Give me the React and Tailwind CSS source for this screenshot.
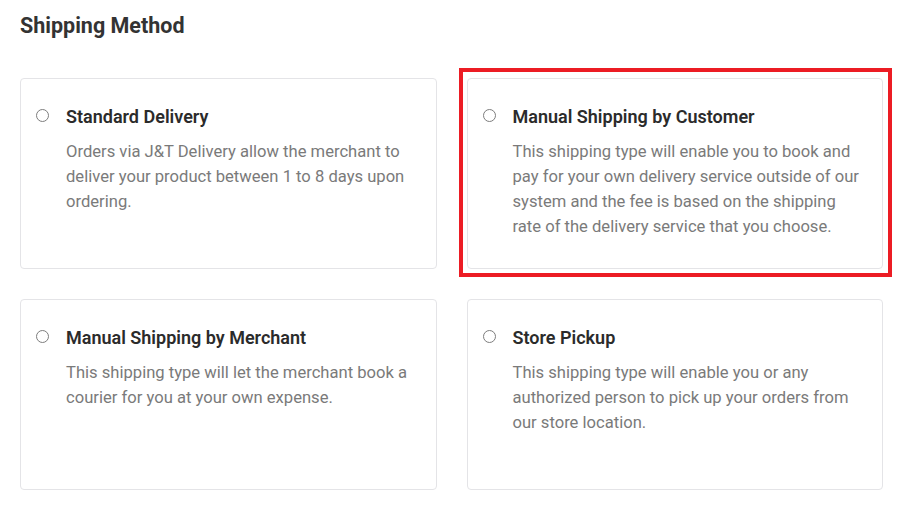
const methods = [
  {
    title: 'Standard Delivery',
    text: 'Orders via J&T Delivery allow the merchant to deliver your product between 1 to 8 days upon ordering.',
  },
  {
    title: 'Manual Shipping by Customer',
    text: 'This shipping type will enable you to book and pay for your own delivery service outside of our system and the fee is based on the shipping rate of the delivery service that you choose.',
    highlight: true,
  },
  {
    title: 'Manual Shipping by Merchant',
    text: 'This shipping type will let the merchant book a courier for you at your own expense.',
  },
  {
    title: 'Store Pickup',
    text: 'This shipping type will enable you or any authorized person to pick up your orders from our store location.',
  },
];

function MethodCard({ title, text, highlight }) {
  return (
    <div className="relative">
      {highlight && (
        <div className="pointer-events-none absolute -left-2 -top-[10px] -right-[9px] -bottom-2 border-4 border-[#ec1c24]" />
      )}
      <label className="flex h-[191px] cursor-pointer items-start rounded border border-[#e4e4e7] bg-white pl-[15px] pr-5 pt-[26px]">
        <span className="mt-[4px] h-[13px] w-[13px] shrink-0 rounded-full border border-[#7d7d7d] bg-white" />
        <div className="ml-[17px]">
          <div className="text-[18px] font-semibold leading-[24px] text-[#2b2b2b]">{title}</div>
          <p className="mt-[10px] text-[16.6px] leading-[25px] text-[#7a7a7a]">{text}</p>
        </div>
      </label>
    </div>
  );
}

export default function App() {
  return (
    <div className="min-h-screen bg-white px-5 pt-[11px]" style={{ fontFamily: 'Roboto, "Noto Sans", sans-serif' }}>
      <h2 className="text-[21.5px] font-bold leading-[29px] text-[#333333]">Shipping Method</h2>
      <div className="mt-[38px] grid w-[863px] grid-cols-2 gap-x-[30px] gap-y-[30px]">
        {methods.map((m) => (
          <MethodCard key={m.title} {...m} />
        ))}
      </div>
    </div>
  );
}
